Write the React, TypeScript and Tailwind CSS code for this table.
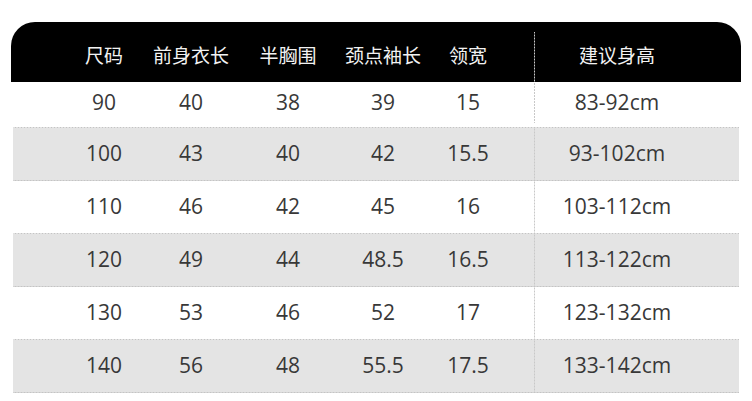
const headers = ['尺码', '前身衣长', '半胸围', '颈点袖长', '领宽'];

const rows = [
  ['90', '40', '38', '39', '15', '83-92cm'],
  ['100', '43', '40', '42', '15.5', '93-102cm'],
  ['110', '46', '42', '45', '16', '103-112cm'],
  ['120', '49', '44', '48.5', '16.5', '113-122cm'],
  ['130', '53', '46', '52', '17', '123-132cm'],
  ['140', '56', '48', '55.5', '17.5', '133-142cm'],
];

const vline =
  'bg-[linear-gradient(to_bottom,#c8c8c8_2px,transparent_2px)] bg-[length:1px_3px] bg-repeat-y bg-left';

export default function App() {
  return (
    <div className="w-[752px] h-[401px] bg-white pt-[22px] pl-[11px] font-['Open_Sans','Noto_Sans_CJK_SC',sans-serif]">
      <div className="w-[730px]">
        <div className="grid grid-cols-[49px_88px_86px_108px_82px_88px_22px_166px_41px] h-[60px] bg-black rounded-t-[24px] text-[#f2f2f2] text-[19px] font-['Noto_Sans_CJK_SC',sans-serif]">
          <div />
          {headers.map((h) => (
            <div key={h} className="flex items-center justify-center pt-[6px] whitespace-nowrap">
              {h}
            </div>
          ))}
          <div />
          <div className="h-full pt-[10px]">
            <div className={`h-full flex items-center justify-center pb-[4px] ${vline}`}>建议身高</div>
          </div>
          <div />
        </div>

        <div className="mx-[2px]">
          {rows.map((r, i) => (
            <div
              key={r[0]}
              className={`grid grid-cols-[47px_88px_86px_108px_82px_88px_22px_166px_39px] text-[21px] text-[#383838] bg-[linear-gradient(to_right,#c4c4c4_2px,transparent_2px)] bg-[length:3px_1px] bg-repeat-x bg-bottom ${
                i === 0 ? 'h-[46px] pb-[5px]' : 'h-[53px] pb-[1px]'
              } ${i % 2 === 1 ? 'bg-[#e4e4e4]' : 'bg-white'}`}
            >
              <div />
              {r.slice(0, 5).map((v, j) => (
                <div key={j} className="flex items-center justify-center">
                  {v}
                </div>
              ))}
              <div />
              <div className={`flex items-center justify-center ${vline}`}>{r[5]}</div>
              <div />
            </div>
          ))}
        </div>
      </div>
    </div>
  );
}
